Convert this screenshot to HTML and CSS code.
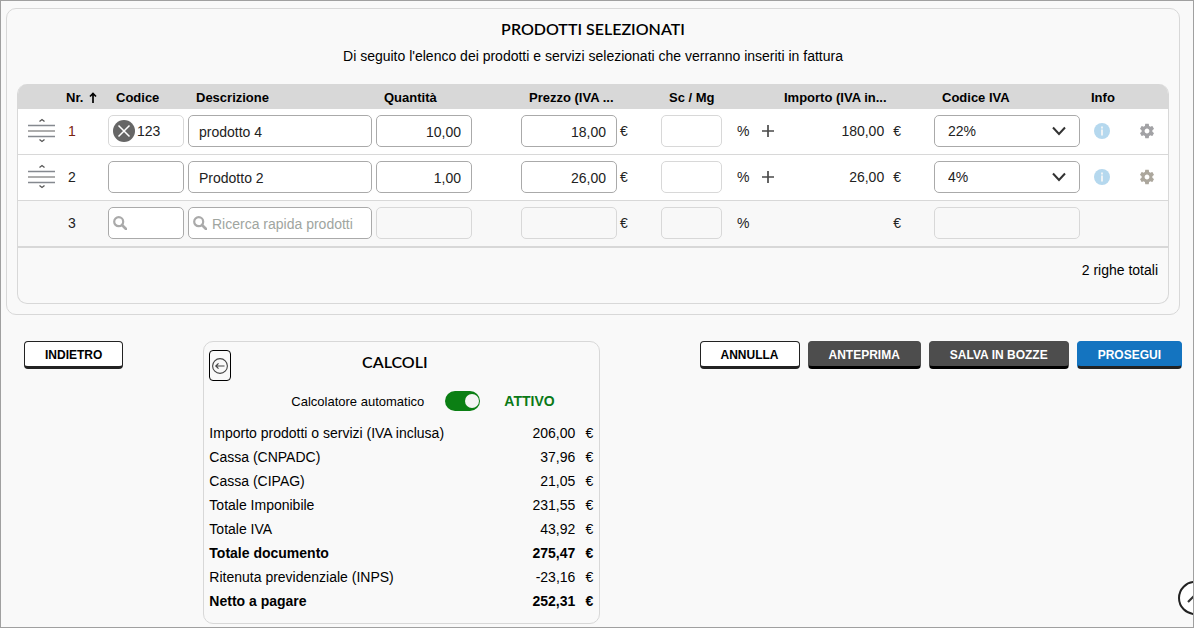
FILE: index.html
```html
<!DOCTYPE html>
<html lang="it">
<head>
<meta charset="utf-8">
<title>Prodotti selezionati</title>
<link rel="stylesheet" href="styles.css">
</head>
<body>
<svg class="sprite" aria-hidden="true">
  <symbol id="drag" viewBox="0 0 28 26">
    <path d="M11.500 3.500L14 1.500l2.500 2M11.500 21.500l2.500 2 2.500-2" fill="none" stroke="#555" stroke-width="1.300"/>
    <path d="M0 7.500h27M0 18.500h27" stroke="#85898f" stroke-width="1.400"/>
    <path d="M0 13h27" stroke="#adadad" stroke-width="2"/>
  </symbol>
  <symbol id="search" viewBox="0 0 14 14">
    <circle cx="5.700" cy="5.700" r="4.500" fill="none" stroke="currentColor" stroke-width="2.200"/>
    <path d="M9 9l4 4" stroke="currentColor" stroke-width="2.600" stroke-linecap="round"/>
  </symbol>
  <symbol id="plus" viewBox="0 0 14 14">
    <path d="M7 1v12M1 7h12" stroke="#4a4a4a" stroke-width="1.700"/>
  </symbol>
  <symbol id="chevron" viewBox="0 0 14 10">
    <path d="M1 1.500l6 6.500 6-6.500" fill="none" stroke="#333" stroke-width="2"/>
  </symbol>
  <symbol id="info" viewBox="0 0 16 16">
    <circle cx="8" cy="8" r="8" fill="#b5d8ee"/>
    <path d="M7 3.500h2v2H7zM7 6.500h2v6H7z" fill="#eef3f6"/>
  </symbol>
  <symbol id="gear" viewBox="0 0 24 24">
    <path fill="currentColor" d="M19.140 12.940c.04-.3.060-.61.060-.94 0-.32-.02-.64-.07-.94l2.030-1.580c.18-.14.230-.41.120-.61l-1.920-3.320c-.12-.22-.37-.29-.59-.22l-2.390.96c-.5-.38-1.030-.7-1.620-.94l-.36-2.540c-.04-.24-.24-.41-.48-.41h-3.840c-.24 0-.43.170-.47.410l-.36 2.540c-.59.240-1.130.570-1.620.940l-2.390-.96c-.22-.08-.47 0-.59.220L2.740 8.870c-.12.210-.08.470.12.610l2.030 1.580c-.05.300-.09.630-.09.940s.02.640.070.940l-2.030 1.580c-.18.140-.23.410-.12.610l1.920 3.320c.12.220.370.290.59.220l2.390-.96c.5.380 1.030.7 1.620.94l.36 2.540c.05.240.24.410.48.410h3.840c.24 0 .44-.17.47-.41l.36-2.540c.59-.24 1.130-.56 1.620-.94l2.390.96c.22.080.470 0 .59-.22l1.920-3.320c.12-.22.070-.47-.12-.61l-2.010-1.580zM12 15.200c-1.760 0-3.200-1.440-3.200-3.200s1.440-3.200 3.200-3.200 3.200 1.440 3.200 3.200-1.440 3.200-3.200 3.200z"/>
  </symbol>
</svg>
<main class="page">
  <section class="products">
    <h1 class="title">PRODOTTI SELEZIONATI</h1>
    <p class="subtitle">Di seguito l'elenco dei prodotti e servizi selezionati che verranno inseriti in fattura</p>
    <div class="grid-box">
      <table class="grid">
        <colgroup>
          <col class="c-drag"><col class="c-nr"><col class="c-code"><col class="c-desc"><col class="c-qty"><col class="c-price"><col class="c-disc"><col class="c-amount"><col class="c-vat"><col class="c-info"><col class="c-gear">
        </colgroup>
        <thead>
          <tr>
            <th></th>
            <th>Nr. <svg class="sort" viewBox="0 0 8 12"><path d="M4 11V2M1 4.500l3-3 3 3" fill="none" stroke="#000" stroke-width="1.700"/></svg></th>
            <th>Codice</th><th>Descrizione</th><th>Quantità</th><th>Prezzo (IVA ...</th><th>Sc / Mg</th><th>Importo (IVA in...</th><th>Codice IVA</th><th>Info</th><th></th>
          </tr>
        </thead>
        <tbody>
          <tr>
            <td><svg class="drag"><use href="#drag"/></svg></td>
            <td class="nr first">1</td>
            <td><div class="field soft w-code"><button class="clear" type="button" aria-label="Rimuovi codice"><svg viewBox="0 0 22 22"><circle cx="11" cy="11" r="11" fill="#666"/><path d="M5.500 5.500l11 11M16.500 5.500l-11 11" stroke="#fff" stroke-width="1.500"/></svg></button><input aria-label="Codice" value="123"></div></td>
            <td><div class="field w-desc"><input class="pad" aria-label="Descrizione" value="prodotto 4"></div></td>
            <td><div class="field w-num"><input class="pad num" aria-label="Quantità" value="10,00"></div></td>
            <td><div class="line"><div class="field w-num"><input class="pad num" aria-label="Prezzo" value="18,00"></div><span class="unit">€</span></div></td>
            <td><div class="line"><div class="field soft w-disc"><input aria-label="Sconto"></div><span class="percent">%</span><button class="add" type="button" aria-label="Aggiungi sconto"><svg><use href="#plus"/></svg></button></div></td>
            <td><div class="line amount"><span>180,00</span><span>€</span></div></td>
            <td><div class="field w-vat"><select aria-label="Codice IVA"><option>22%</option></select><svg class="chevron"><use href="#chevron"/></svg></div></td>
            <td><button class="info" type="button" aria-label="Info"><svg><use href="#info"/></svg></button></td>
            <td><button class="gear" type="button" aria-label="Impostazioni"><svg><use href="#gear"/></svg></button></td>
          </tr>
          <tr>
            <td><svg class="drag"><use href="#drag"/></svg></td>
            <td class="nr">2</td>
            <td><div class="field w-code"><input aria-label="Codice"></div></td>
            <td><div class="field w-desc"><input class="pad" aria-label="Descrizione" value="Prodotto 2"></div></td>
            <td><div class="field w-num"><input class="pad num" aria-label="Quantità" value="1,00"></div></td>
            <td><div class="line"><div class="field w-num"><input class="pad num" aria-label="Prezzo" value="26,00"></div><span class="unit">€</span></div></td>
            <td><div class="line"><div class="field soft w-disc"><input aria-label="Sconto"></div><span class="percent">%</span><button class="add" type="button" aria-label="Aggiungi sconto"><svg><use href="#plus"/></svg></button></div></td>
            <td><div class="line amount"><span>26,00</span><span>€</span></div></td>
            <td><div class="field w-vat"><select aria-label="Codice IVA"><option>4%</option></select><svg class="chevron"><use href="#chevron"/></svg></div></td>
            <td><button class="info" type="button" aria-label="Info"><svg><use href="#info"/></svg></button></td>
            <td><button class="gear warm" type="button" aria-label="Impostazioni"><svg><use href="#gear"/></svg></button></td>
          </tr>
          <tr class="new">
            <td></td>
            <td class="nr">3</td>
            <td><div class="field w-code"><svg class="search"><use href="#search"/></svg><input aria-label="Cerca codice"></div></td>
            <td><div class="field w-desc"><svg class="search"><use href="#search"/></svg><input class="quick" aria-label="Cerca prodotto" placeholder="Ricerca rapida prodotti"></div></td>
            <td><div class="field off w-num"><input aria-label="Quantità" disabled></div></td>
            <td><div class="line"><div class="field off w-num"><input aria-label="Prezzo" disabled></div><span class="unit">€</span></div></td>
            <td><div class="line"><div class="field off w-disc"><input aria-label="Sconto" disabled></div><span class="percent">%</span></div></td>
            <td><div class="line amount"><span></span><span>€</span></div></td>
            <td><div class="field off w-vat"><input aria-label="Codice IVA" disabled></div></td>
            <td></td>
            <td></td>
          </tr>
        </tbody>
      </table>
      <p class="count">2 righe totali</p>
    </div>
  </section>

  <div class="lower">
    <button class="btn" type="button">INDIETRO</button>
    <section class="totals">
      <header class="totals-head">
        <button class="collapse" type="button" aria-label="Comprimi"><svg viewBox="0 0 16 16"><circle cx="8" cy="8" r="7.400" fill="none" stroke="#444" stroke-width="1.100"/><path d="M12.500 8H4M6.500 5.300L3.800 8l2.700 2.700" fill="none" stroke="#444" stroke-width="1.200"/></svg></button>
        <h2 class="title">CALCOLI</h2>
      </header>
      <div class="auto">
        <label for="auto">Calcolatore automatico</label>
        <input class="switch" id="auto" type="checkbox" role="switch" checked>
        <strong>ATTIVO</strong>
      </div>
      <table class="sums">
        <tr><td>Importo prodotti o servizi (IVA inclusa)</td><td>206,00</td><td>€</td></tr>
        <tr><td>Cassa (CNPADC)</td><td>37,96</td><td>€</td></tr>
        <tr><td>Cassa (CIPAG)</td><td>21,05</td><td>€</td></tr>
        <tr><td>Totale Imponibile</td><td>231,55</td><td>€</td></tr>
        <tr><td>Totale IVA</td><td>43,92</td><td>€</td></tr>
        <tr class="strong"><td>Totale documento</td><td>275,47</td><td>€</td></tr>
        <tr><td>Ritenuta previdenziale (INPS)</td><td>-23,16</td><td>€</td></tr>
        <tr class="strong"><td>Netto a pagare</td><td>252,31</td><td>€</td></tr>
      </table>
    </section>
    <div class="actions">
      <button class="btn" type="button">ANNULLA</button>
      <button class="btn dark" type="button">ANTEPRIMA</button>
      <button class="btn dark" type="button">SALVA IN BOZZE</button>
      <button class="btn blue" type="button">PROSEGUI</button>
    </div>
  </div>
  <button class="to-top" type="button" aria-label="Torna su"><svg viewBox="0 0 34 34"><circle cx="17" cy="17" r="16" fill="#fff" stroke="#222" stroke-width="2"/><path d="M10 21l7-7 7 7" fill="none" stroke="#333" stroke-width="2.200"/></svg></button>
</main>
</body>
</html>
```
FILE: styles.css
```css
* { box-sizing: border-box; }

body {
  margin: 0;
  background: #f9f9f9;
  color: #000;
  font: 14px/20px "Liberation Sans", Arial, sans-serif;
}

button, input, select { font: inherit; color: inherit; margin: 0; }
button { padding: 0; border: 0; background: none; cursor: pointer; }
svg { display: block; }
.sprite { display: none; }

.page {
  position: relative;
  overflow: hidden;
  min-height: 100vh;
  padding: 7px 11px 3px 5px;
  border: 1px solid #a0a0a0;
}

.title {
  margin: 0;
  font: 600 16px/20px Lato, sans-serif;
  text-align: center;
}

.products {
  margin-right: 2px;
  padding: 10px;
  border: 1px solid #d8d8d8;
  border-radius: 10px;
}

.subtitle { margin: 7px 0 18px; text-align: center; }

.grid-box {
  overflow: hidden;
  border: 1px solid #d8d8d8;
  border-top: 0;
  border-radius: 10px;
}

.grid { width: 100%; table-layout: fixed; border-collapse: separate; border-spacing: 0; }
.c-drag { width: 40px; }
.c-nr { width: 50px; }
.c-code { width: 80px; }
.c-qty { width: 145px; }
.c-price { width: 140px; }
.c-disc { width: 115px; }
.c-amount { width: 158px; }
.c-vat { width: 149px; }
.c-info { width: 49px; }
.c-gear { width: 36px; }

.grid th {
  height: 25px;
  padding: 2px 8px 0;
  background: #d8d8d8;
  font-size: 13px;
  text-align: left;
  white-space: nowrap;
}
.sort { display: inline-block; width: 8px; height: 12px; margin-left: 2px; vertical-align: -2px; }

.grid td { padding: 6px 0 7px; border-bottom: 1px solid #d8d8d8; background: #fff; color: #222; }
.grid .new td { border-bottom-width: 2px; background: #f8f8f8; }
.grid .nr { padding-left: 10px; }
.grid .first { color: #7a2410; }

.drag { width: 28px; height: 26px; margin: -1px 0 0 10px; }

.field {
  position: relative;
  display: flex;
  align-items: center;
  height: 32px;
  border: 1px solid #aaa;
  border-radius: 5px;
  background: #fff;
}
.soft { border-color: #d8d8d8; }
.off { border-color: #d8d8d8; background: #f8f8f8; }
.w-code { width: 76px; }
.w-desc { margin-right: 4px; }
.w-num { width: 96px; }
.w-disc { width: 61px; }
.w-vat { width: 146px; }

.field input, .field select {
  flex: 1;
  width: 100%;
  min-width: 0;
  height: 30px;
  padding: 0;
  border: 0;
  outline: 0;
  background: none;
  appearance: none;
}
.field input::placeholder { color: #a0a5a0; opacity: 1; }
.field .pad { padding: 2px 10px 0; }
.field .quick { padding: 2px 0 0 1px; }
.field .num { text-align: right; }
.field select { padding: 0 13px; opacity: 1; }
.chevron { position: absolute; right: 13px; width: 14px; height: 10px; pointer-events: none; }
.search { flex: none; width: 14px; height: 14px; margin: 0 4px; color: #aaa; }
.clear { flex: none; width: 22px; margin: 0 2px 0 4px; }

.line { display: flex; align-items: center; }
.unit { margin-left: 3px; }
.percent { width: 12px; margin-left: 15px; }
.add { margin-left: 12px; }
.add svg { width: 14px; height: 14px; }
.amount { justify-content: flex-end; gap: 9px; padding-right: 33px; }

.info { display: block; margin-left: 11px; }
.info svg { width: 16px; height: 16px; }
.gear { display: block; margin-left: 6px; color: #a2a2a5; }
.gear svg { width: 18px; height: 18px; }
.warm { color: #aca79d; }

.count { margin: 0; padding: 12px 10px 23px; text-align: right; }

.lower { display: flex; align-items: flex-start; margin-top: 26px; padding-left: 18px; }

.btn {
  height: 28px;
  padding: 2px 20px 0;
  border: 1px solid #222;
  border-bottom-width: 3px;
  border-radius: 4px;
  background: #fff;
  font-size: 12px;
  font-weight: bold;
}
.dark { border-color: #4d4d4d #4d4d4d #000; background: #4d4d4d; color: #fff; }
.blue { border-color: #1474c0 #1474c0 #222; background: #1474c0; color: #fff; }

.actions { display: flex; gap: 8px; margin-left: auto; }

.totals {
  width: 397px;
  margin-left: 80px;
  padding: 8px 5px 10px;
  border: 1px solid #d8d8d8;
  border-radius: 10px;
}
.totals-head { display: grid; grid-template-columns: 22px 1fr 36px; }
.totals-head .title { padding-top: 2px; }
.collapse { height: 31px; padding: 0 2px; border: 1px solid #000; border-radius: 4px; }
.collapse svg { width: 16px; height: 16px; }

.auto { display: flex; align-items: center; margin: 10px 0; padding-left: 82px; font-size: 13px; }
.auto label { padding-top: 2px; line-height: 18px; }
.auto strong { color: #0b7a17; font-size: 14px; }
.switch {
  display: flex;
  width: 35px;
  height: 20px;
  margin: 0 24px 0 21px;
  padding: 3px 1px;
  border-radius: 10px;
  background: #0b7f14;
  appearance: none;
}
.switch::before { content: ""; width: 14px; height: 14px; border-radius: 50%; background: #f5f5f5; }
.switch:checked { justify-content: flex-end; }

.sums { width: 100%; border-collapse: collapse; }
.sums td { height: 24px; padding: 0; }
.sums td:nth-child(2) { text-align: right; }
.sums td:nth-child(3) { width: 19px; padding-right: 1px; text-align: right; }
.strong { font-weight: bold; }

.to-top { position: absolute; right: -19px; bottom: 12px; }
.to-top svg { width: 34px; height: 34px; }
```
